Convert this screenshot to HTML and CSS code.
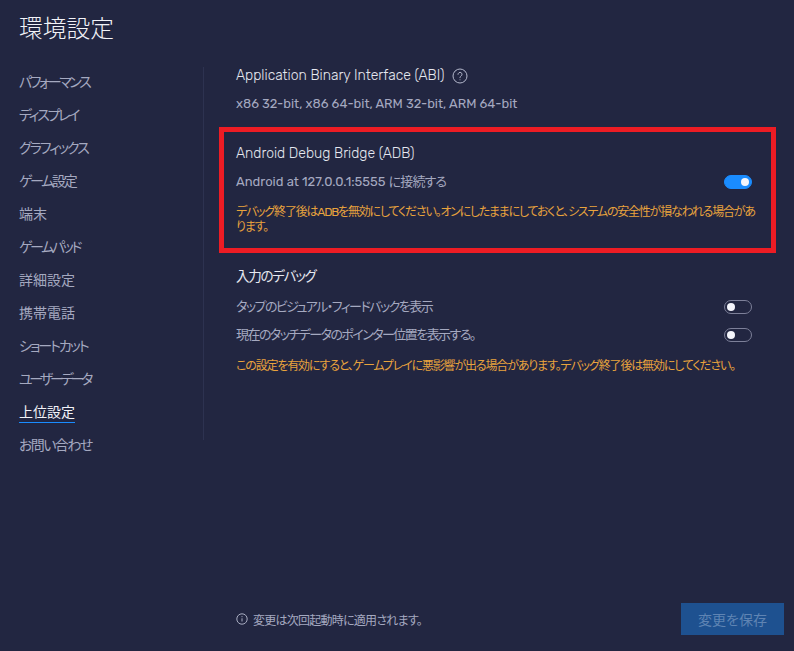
FILE: index.html
```html
<!DOCTYPE html>
<html lang="ja">
<head>
<meta charset="utf-8">
<title>環境設定</title>
<link rel="stylesheet" href="styles.css">
</head>
<body>
<div class="app">
  <h1 class="title">環境設定</h1>
  <div class="columns">
    <nav class="nav">
      <a class="nav-item tight-3">パフォーマンス</a>
      <a class="nav-item tight-3">ディスプレイ</a>
      <a class="nav-item tight-2">グラフィックス</a>
      <a class="nav-item tight-3">ゲーム設定</a>
      <a class="nav-item">端末</a>
      <a class="nav-item tight-3">ゲームパッド</a>
      <a class="nav-item">詳細設定</a>
      <a class="nav-item">携帯電話</a>
      <a class="nav-item tight-2">ショートカット</a>
      <a class="nav-item tight-4">ユーザーデータ</a>
      <a class="nav-item active"><span>上位設定</span></a>
      <a class="nav-item tight-1">お問い合わせ</a>
    </nav>
    <main class="content">
      <section class="abi">
        <h2 class="heading">Application Binary Interface (ABI)
          <svg class="help" width="16" height="16" viewBox="0 0 16 16" fill="none" stroke="#b4b8cc" stroke-width="1"><circle cx="8" cy="8" r="7"/><path d="M6 6.3a2 2 0 1 1 3.1 1.7c-.7.5-1.100.8-1.100 1.700" stroke-linecap="round"/><circle cx="8" cy="11.700" r=".5" fill="#b4b8cc" stroke="none"/></svg>
        </h2>
        <p class="value">x86 32-bit, x86 64-bit, ARM 32-bit, ARM 64-bit</p>
      </section>
      <section class="adb">
        <h2 class="heading">Android Debug Bridge (ADB)</h2>
        <div class="row adb-row">
          <span class="label">Android at 127.0.0.1:5555 <span class="cjk-inline">に接続する</span></span>
          <span class="toggle on"></span>
        </div>
        <p class="warn warn-tight">デバッグ終了後はADBを無効にしてください。オンにしたままにしておくと、システムの安全性が損なわれる場合があります。</p>
      </section>
      <section class="debug">
        <h2 class="heading cjk-heading">入力のデバッグ</h2>
        <div class="row first-row">
          <span class="label cjk">タップのビジュアル・フィードバックを表示</span>
          <span class="toggle"></span>
        </div>
        <div class="row second-row">
          <span class="label cjk">現在のタッチデータのポインター位置を表示する。</span>
          <span class="toggle"></span>
        </div>
        <p class="warn warn-single">この設定を有効にすると、ゲームプレイに悪影響が出る場合があります。デバッグ終了後は無効にしてください。</p>
      </section>
      <footer class="footer">
        <span class="note">
          <svg width="12" height="12" viewBox="0 0 12 12" fill="none" stroke="#a9adc2" stroke-width="1"><circle cx="6" cy="6" r="5.200"/><path d="M6 5.300v3.200M6 3.200v1"/></svg>
          <span>変更は次回起動時に適用されます。</span>
        </span>
        <button class="save">変更を保存</button>
      </footer>
    </main>
  </div>
</div>
</body>
</html>
```
FILE: styles.css
```css
* { box-sizing: border-box; }
html, body { margin: 0; height: 100%; }
body {
  background: #222641;
  font-family: Rubik, Inter, "Noto Sans CJK JP", sans-serif;
  font-feature-settings: "palt";
  overflow: hidden;
}
.app { height: 651px; display: flex; flex-direction: column; }
.title {
  margin: 0;
  padding: 13px 0 0 19px;
  height: 66px;
  font-size: 23.750px;
  line-height: 32px;
  font-weight: 300;
  color: #f2f3f8;
}
.columns { flex: 1; display: flex; min-height: 0; }
.nav {
  width: 204px;
  height: 373px;
  margin-top: 1px;
  border-right: 1px solid #2d3250;
  display: flex;
  flex-direction: column;
}
.nav-item {
  height: 33px;
  flex: none;
  padding-left: 19px;
  font-size: 14px;
  line-height: 32px;
  color: #a5a9c0;
}
.tight-1 { letter-spacing: -1.600px; }
.tight-2 { letter-spacing: -2px; }
.tight-3 { letter-spacing: -2.350px; }
.tight-4 { letter-spacing: -3.200px; }
.nav-item.active { color: #f2f3f8; }
.nav-item.active span {
  display: inline-block;
  line-height: 19px;
  border-bottom: 1px solid #1a8cff;
}
.content {
  flex: 1;
  min-width: 0;
  padding-left: 15px;
  display: flex;
  flex-direction: column;
}
.heading {
  margin: 0;
  font-size: 14px;
  line-height: 18px;
  font-weight: 300;
  color: #e6e8f0;
  display: flex;
  align-items: center;
  gap: 8px;
}
.cjk-heading { font-size: 13.550px; letter-spacing: -1.300px; font-weight: 400; }
.abi { padding: 1px 0 0 17px; }
.value {
  margin: 10px 0 0;
  font-size: 12.900px;
  line-height: 18px;
  color: #a5a9c0;
}
.adb {
  margin-top: 14px;
  width: 557px;
  height: 126px;
  border: 5px solid #ed1c24;
  padding: 13px 8px 0 12px;
}
.row { display: flex; align-items: center; justify-content: space-between; }
.adb-row { margin-top: 10px; padding-right: 11px; }
.label { font-size: 13px; line-height: 18px; color: #a5a9c0; }
.cjk { letter-spacing: -1.550px; }
.cjk-inline { letter-spacing: -.9px; }
.toggle {
  position: relative;
  width: 28px;
  height: 14px;
  border-radius: 7px;
  border: 1px solid #7d8099;
  flex: none;
}
.toggle::after {
  content: "";
  position: absolute;
  left: 2px;
  top: 2px;
  width: 8px;
  height: 8px;
  border-radius: 50%;
  background: #f4f5fb;
}
.toggle.on { background: #1a8cff; border-color: #1a8cff; }
.toggle.on::after { left: auto; right: 2px; }
.warn {
  margin: 14px 0 0;
  font-size: 12px;
  letter-spacing: -1.150px;
  line-height: 15px;
  color: #e8a33d;
}
.warn-tight { letter-spacing: -1.200px; }
.debug { margin-top: 14px; padding: 0 42px 0 17px; }
.first-row { margin-top: 13px; }
.second-row { margin-top: 10px; }
.warn-single { margin-top: 15px; }
.footer {
  margin-top: auto;
  padding: 0 10px 16px 17px;
  display: flex;
  align-items: center;
  justify-content: space-between;
}
.note {
  display: flex;
  align-items: center;
  gap: 5px;
  font-size: 12px;
  letter-spacing: -.75px;
  color: #a5a9c0;
}
.save {
  width: 103px;
  height: 32px;
  border: 0;
  padding: 0;
  background: #1e5190;
  color: #5f84b3;
  font: inherit;
  font-size: 14px;
}
```
